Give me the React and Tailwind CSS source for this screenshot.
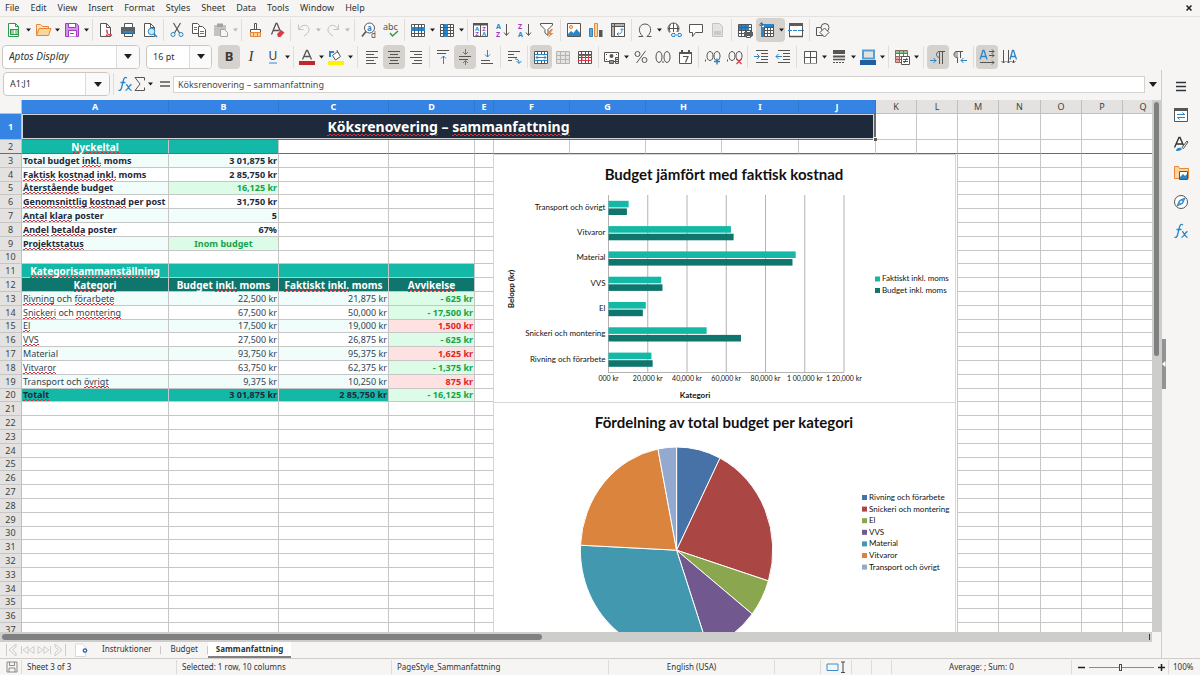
import React from "react";

const INK = "#555553";
const BLUE = "#2a86c8";
const RED = "#dd3b44";
const ORANGE = "#e8873a";
const GREEN = "#2f9a4c";
const PURPLE = "#a13cc0";

const L = ({ d, c = INK, w = 1, f = "none" }) => (
  <path d={d} stroke={c} strokeWidth={w} fill={f} />
);
const T = ({ x, y, s = 7, c = INK, children, b }) => (
  <text x={x} y={y} fontSize={s} fill={c} fontWeight={b ? 700 : 400} fontFamily="Noto Sans, sans-serif">
    {children}
  </text>
);

const GRID = "M1.5 2.5h13v12h-13zM1.5 5.5h13M1.5 8.5h13M1.5 11.5h13M4.5 2.5v12M8.5 2.5v12M11.5 2.5v12";

const ICONS = {
  new: (
    <>
      <L d="M2.5 1.5h7l3 3v10h-10z" c={GREEN} f="#fff" />
      <L d="M9.5 1.5v3h3" c={GREEN} />
      <path d="M4 7h9v6H4z" fill={GREEN} />
      <L d="M5 9h7M5 11h7M8.5 8v4" c="#fff" />
    </>
  ),
  open: (
    <>
      <L d="M1.5 13.5v-11h4l2 2h6v3" c={ORANGE} f="#fbe3bd" />
      <L d="M1.5 13.5l2.5-7h12l-2.5 7z" c={ORANGE} f="#f9d699" />
    </>
  ),
  save: (
    <>
      <L d="M1.5 1.5h11l2 2v11h-13z" c={PURPLE} f="#d493e4" />
      <L d="M4.5 1.5h7v4h-7z" c={PURPLE} f="#fff" />
      <L d="M4.5 14.5v-6h8v6" c={PURPLE} f="#fff" />
      <L d="M6 11.5h4" c={PURPLE} />
    </>
  ),
  pdf: (
    <>
      <L d="M2.5 1.5h6l4 4v9h-10z" f="#fff" />
      <L d="M8.5 1.5v4h4" />
      <L d="M7 15c3-3 3-6 2-7s-1 2 1 4 4 2 4 1-5-.5-7 2z" c={RED} />
    </>
  ),
  print: (
    <>
      <L d="M4.500 5.500v-4h8v4" f="#fff" />
      <path d="M1 5h14v7H1z" fill="#5b6168" />
      <path d="M3 9h10v2H3z" fill={BLUE} />
      <L d="M4.500 11.500h8v3h-8z" f="#fff" />
    </>
  ),
  preview: (
    <>
      <L d="M2.500 1.500h6l4 4v9h-10z" f="#fff" />
      <L d="M8.500 1.500v4h4" />
      <circle cx="9.500" cy="9.500" r="3.300" fill="#cfe6f7" stroke={BLUE} />
      <L d="M12 12l3 3" c={BLUE} w={1.5} />
    </>
  ),
  cut: (
    <>
      <L d="M4.500 1l6 10M11.500 1l-6 10" w={1.2} />
      <circle cx="4" cy="12.500" r="2" fill="none" stroke={BLUE} />
      <circle cx="12" cy="12.500" r="2" fill="none" stroke={BLUE} />
    </>
  ),
  copy: (
    <>
      <L d="M1.500 1.500h5l2 2v8h-7z" f="#fff" />
      <L d="M7.500 4.500h4l3 3v7h-7z" f="#fff" />
      <L d="M3 5.500h3M3 7.500h3M9 9.500h4M9 11.500h4" c={BLUE} />
    </>
  ),
  paste: (
    <>
      <path d="M1 3h12v11H1z" fill="#c4c3c1" />
      <path d="M4 1.500h6V5H4z" fill="#a3a2a0" />
      <L d="M7.500 7.500h4l3 3v4h-7z" c="#a5a4a2" f="#f6f5f4" />
    </>
  ),
  clone: (
    <>
      <L d="M7.500 1.500h2v6h-2z" f="#fff" />
      <L d="M3.500 7.500h10v3h-10z" f="#fff" />
      <L d="M3.500 10.500h10v4h-10z" c={ORANGE} f="#f9d699" />
      <L d="M6.500 11v3M10.500 11v3" c={ORANGE} />
    </>
  ),
  clear: (
    <>
      <L d="M2.500 12.500l4.500-11h1l3.500 8M4 8.500h6" w={1.3} />
      <path d="M8 12l4-4 3.500 2.500-4 4.500H9z" fill={RED} />
    </>
  ),
  undo: <L d="M2.500 2.500v5h5M3 7c3-5 9-5 10 0 .5 3-2 5-5 7" c="#c2c1bf" />,
  redo: <L d="M13.500 2.500v5h-5M13 7c-3-5-9-5-10 0-.5 3 2 5 5 7" c="#c2c1bf" />,
  find: (
    <>
      <circle cx="8.500" cy="6" r="5" fill="#fff" stroke={INK} />
      <T x={6} y={8.5} s={8} c={BLUE} b>a</T>
      <L d="M5 9.500L1 14.500" w={1.6} />
      <T x={10} y={15.5} s={8}>d</T>
    </>
  ),
  spell: (
    <>
      <T x={0} y={8} s={9}>abc</T>
      <L d="M7 11l2.500 3L15 9" c={GREEN} w={1.5} />
    </>
  ),
  row: (
    <>
      <L d={GRID} f="#fff" />
      <path d="M1 5h14v4H1z" fill={BLUE} />
      <L d="M4.500 5v4M8.500 5v4M11.500 5v4" c="#1f6aa5" />
    </>
  ),
  col: (
    <>
      <L d={GRID} f="#fff" />
      <path d="M5 2h4v13H5z" fill={BLUE} />
      <L d="M5 5.500h4M5 8.500h4M5 11.500h4" c="#1f6aa5" />
    </>
  ),
  sort: (
    <>
      <L d="M.5 1.500h14v13H.5zM7.500 1.500v13" f="#fff" />
      <path d="M0 1h15v2.500H0z" fill={INK} />
      <T x={2} y={8.8} s={6} c={BLUE} b>A</T>
      <T x={2.2} y={14} s={6} c={PURPLE} b>Z</T>
      <T x={9.2} y={8.8} s={6} c={PURPLE} b>Z</T>
      <T x={9} y={14} s={6} c={BLUE} b>A</T>
    </>
  ),
  az: (
    <>
      <T x={1} y={6.5} s={7} c={BLUE} b>A</T>
      <T x={1} y={15} s={7} c={PURPLE} b>Z</T>
      <L d="M11.500 2v11M9 10.500l2.500 3 2.500-3" />
    </>
  ),
  za: (
    <>
      <T x={1} y={6.5} s={7} c={PURPLE} b>Z</T>
      <T x={1} y={15} s={7} c={BLUE} b>A</T>
      <L d="M11.500 2v11M9 10.500l2.500 3 2.500-3" />
    </>
  ),
  filter: (
    <>
      <L d="M1.500 1.500h12v1.500l-4.500 4.500v6l-3-2.500V7.500L1.500 3z" f="#fff" />
      <path d="M12 7l-4 5h3l-2 4 5.500-5h-3L14 7z" fill={ORANGE} />
    </>
  ),
  image: (
    <>
      <L d="M1.500 1.500h13v13h-13z" f="#fff" />
      <circle cx="5" cy="5" r="1.600" fill="#f9d699" stroke={ORANGE} />
      <path d="M2 14v-2l3-3 2.500 2 3-4 3.500 4v3z" fill={BLUE} />
    </>
  ),
  chart: (
    <>
      <L d="M1.500 6.500h3v8h-3z" c={BLUE} f="#5aa7df" />
      <L d="M6.500 1.500h3v13h-3z" c={ORANGE} f="#f9d699" />
      <path d="M11 8h3.500v7H11z" fill={INK} />
    </>
  ),
  pivot: (
    <>
      <L d="M1.500 1.500h13v13h-13z" f="#fff" />
      <path d="M2 2h12v2H2zM2 4h2v10H2z" fill="#b5b4b2" />
      <L d="M1.500 1.500h13v13h-13zM4.500 1.500v13M1.500 4.500h13" />
      <L d="M7 12c4 0 5-1 5-5M10.500 8L12 6.500 13.500 8M8.500 10.500L7 12l1.500 1.500" c={BLUE} />
    </>
  ),
  omega: <L d="M1.500 14.500h4.500c-6-5-4-12.500 2-12.500s8 7.500 2 12.500h4.500" />,
  link: (
    <>
      <circle cx="7.500" cy="6.500" r="5.500" fill="#fff" stroke={INK} />
      <L d="M2 6.500h11M7.500 1v11M4.500 2c-1.500 3-1.500 6 0 9M10.500 2c1.500 3 1.500 6 0 9" />
      <path d="M4 10h12v6H4z" fill="#f6f5f4" />
      <L d="M9 11.500H7a1.500 1.500 0 000 3h2M12 11.500h2a1.500 1.500 0 010 3h-2M8 13h5" c={BLUE} />
    </>
  ),
  comment: <L d="M1.500 2.500h13v8h-7l-3 4v-4h-3z" f="#fff" />,
  headfoot: (
    <>
      <L d="M2.500 1.500h7l3 3v10h-10z" c="#c4c3c1" f="#e4e3e1" />
      <path d="M4 9h7v4H4z" fill="#c9c8c6" />
    </>
  ),
  area: (
    <>
      <L d={GRID} f="#fff" />
      <path d="M2 3h10v5H2z" fill={BLUE} />
      <L d="M2 5.500h10M4.500 3v5M8.500 3v5" c="#1f6aa5" />
      <path d="M7 10h9v4H7z" fill="#5b6168" />
      <L d="M9.500 8.500h4v2h-4zM9.500 13.500h4v2h-4z" f="#fff" />
    </>
  ),
  freeze: (
    <>
      <L d="M2.500 2.500h12v12h-12zM5.500 2.500v12M2.500 5.500h12M8.500 2.500v12M11.500 2.500v12M2.500 8.500h12M2.500 11.500h12" f="#fff" />
      <path d="M5 2h9v3H5zM2 5h3v10H2z" fill={BLUE} />
      <L d="M0 3h5M2.500 0v5M1 1l3 3M4 1L1 4" c={BLUE} />
    </>
  ),
  split: (
    <>
      <L d="M1.500 1.500h13v13h-13z" f="#fff" />
      <path d="M1 1h14v3H1z" fill="#5b5b59" />
      <L d="M1 14.500h14" w={1.5} />
      <path d="M0 8.500h16" stroke={BLUE} strokeDasharray="4 1" />
    </>
  ),
  shapes: (
    <>
      <L d="M1.500 5.500h8v8h-8z" />
      <circle cx="10" cy="5.500" r="4" fill="#f6f5f4" stroke={INK} />
      <L d="M9.500 6l4.500 4.500-4.500 4.500L5 10.500z" f="#f6f5f4" />
    </>
  ),
  textcolor: (
    <>
      <L d="M3.500 10.500l4-9h1l4 9M5 7.500h6" w={1.3} />
      <path d="M0 12h16v4H0z" fill="#c4262e" />
    </>
  ),
  highlight: (
    <>
      <L d="M4.500 6.500l5-4 3 5-5 3.500z" f="#fff" />
      <path d="M1 2h5v2H3v4H1z" fill={BLUE} />
      <L d="M9 1l1 3" />
      <path d="M0 12h16v4H0z" fill="#fff200" />
    </>
  ),
  left: <L d="M2 2.500h12M2 5.500h8M2 8.500h12M2 11.500h8M2 14.500h10" />,
  center: <L d="M2 2.500h12M4 5.500h8M2 8.500h12M4 11.500h8M3 14.500h10" />,
  right: <L d="M2 2.500h12M6 5.500h8M2 8.500h12M6 11.500h8M4 14.500h10" />,
  top: (
    <>
      <L d="M2 1.500h12M2 4.500h9" />
      <L d="M8.500 15V7M6 9.500L8.500 7 11 9.500" c={BLUE} />
    </>
  ),
  middle: (
    <>
      <L d="M2 7.500h12M2 10.500h9" />
      <L d="M8.500 0v5M6 3l2.500 2.500L11 3M8.500 16v-4M6 14l2.500-2.500L11 14" c={BLUE} />
    </>
  ),
  bottom: (
    <>
      <L d="M2 11.500h9M2 14.500h12" />
      <L d="M8.500 1v7M6 5.500L8.500 8 11 5.500" c={BLUE} />
    </>
  ),
  wrap: (
    <>
      <L d="M2 2.500h12M2 5.500h6M2 8.500h9M2 11.500h4" />
      <L d="M9 10c3 0 4 1 4 4M10.500 12l2.500 2.500 2.500-2.500" c={BLUE} />
    </>
  ),
  merge: (
    <>
      <L d={GRID} f="#fff" />
      <path d="M2 6h12v5H2z" fill="#fff" />
      <L d="M1.500 5.500h13M1.500 11.500h13M3 8.500h10M5 6.500l-2 2 2 2M11 6.500l2 2-2 2" c={BLUE} />
    </>
  ),
  merge2: (
    <>
      <path d="M1 2h14v12H1z" fill="#e4e3e1" />
      <L d="M1.500 2.500h13v12h-13zM1.500 6.500h13M1.500 10.500h13M5.500 2.500v12M10.500 2.500v12" c="#b5b4b2" />
    </>
  ),
  unmerge: (
    <>
      <L d={GRID} f="#fff" />
      <L d="M1 6.500h14M1 11.500h14M5 6.500v5M8.500 6.500v5M11.500 6.500v5" c={RED} />
    </>
  ),
  currency: (
    <>
      <L d="M.5 3.500h14v9H.5z" f="#fff" />
      <circle cx="7.500" cy="7" r="2" fill={INK} />
      <path d="M2 10h1v1H2zM2 5h1v1H2zM12 5h1v1h-1z" fill={INK} />
      <L d="M5.500 11.500h4v3h-4zM11.500 8.500h3v6h-3z" f="#d8d7d5" />
      <L d="M5.500 13h4M11.500 10.500h3M11.500 12.500h3" />
    </>
  ),
  percent: (
    <>
      <circle cx="4.500" cy="5" r="2.500" fill="none" stroke={INK} />
      <circle cx="11.500" cy="11" r="2.500" fill="none" stroke={INK} />
      <L d="M12.500 2l-9 12" />
    </>
  ),
  number: (
    <>
      <L d="M4 2.500c-4 0-4 11 0 11s4-11 0-11zM12 2.500c-4 0-4 11 0 11s4-11 0-11z" />
      <L d="M8 12v2" />
    </>
  ),
  date: (
    <>
      <L d="M2.500 3.500h12v11h-12z" f="#fff" />
      <path d="M2 3h13v2H2zM4 1h2v3H4zM11 1h2v3h-2z" fill={INK} />
      <L d="M6 7.500h5l-2.500 6" w={1.2} />
    </>
  ),
  adddec: (
    <>
      <L d="M6 2.500c-4 0-4 9 0 9s4-9 0-9zM13 2.500c-4 0-4 9 0 9s4-9 0-9zM1.500 10.500v2" />
      <L d="M10 12.500h6M13 9.500v6" c={BLUE} w={1.4} />
    </>
  ),
  deldec: (
    <>
      <L d="M6 2.500c-4 0-4 9 0 9s4-9 0-9zM13 2.500c-4 0-4 9 0 9s4-9 0-9zM1.500 10.500v2" />
      <L d="M10.500 10l5 5M15.500 10l-5 5" c={RED} w={1.2} />
    </>
  ),
  indent: (
    <>
      <L d="M3 1.500h12M8 4.500h7M8 7.500h7M8 10.500h7M3 13.500h12" />
      <L d="M1 7.500h5M4 5l2.500 2.500L4 10" c={BLUE} />
    </>
  ),
  outdent: (
    <>
      <L d="M3 1.500h12M8 4.500h7M8 7.500h7M8 10.500h7M3 13.500h12" />
      <L d="M1 7.500h6M3.500 5L1 7.500 3.500 10" c={BLUE} />
    </>
  ),
  borders: (
    <>
      <L d="M2.500 2.500h12v12h-12zM8.500 2.500v12M2.500 8.500h12" f="#fff" />
      <L d="M2 14.500h13" c={ORANGE} />
    </>
  ),
  linestyle: (
    <>
      <path d="M2 1h12v4H2zM2 6.500h12v2H2z" fill={INK} />
      <L d="M2 10.500h12" w={1.5} />
      <path d="M2 13h2v1H2zM5 13h2v1H5zM8 13h2v1H8zM11 13h2v1h-2z" fill={INK} />
    </>
  ),
  linecolor: (
    <>
      <L d="M3 1.500h11v8H3z" c="#5a9fd4" w={2} f="#e4e3e1" />
      <path d="M0 11h16v5H0z" fill="#1f5f9e" />
    </>
  ),
  conditional: (
    <>
      <path d="M1 1h12v12H1z" fill="#fff" />
      <path d="M1 1h12v3H1z" fill="#7fc98f" />
      <path d="M1 7h5v6H1z" fill="#f2a0a0" />
      <L d="M1.500 1.500h12v12h-12zM1.500 4.500h12M1.500 7.500h12M1.500 10.500h12M5.500 1.500v12M9.500 1.500v12" c="#8d6a62" />
      <L d="M7.500 7.500h8v8h-8z" f="#fff" />
      <L d="M9 10.500h5M9 12.500h5M13 9l-3 5" />
    </>
  ),
  ltr: (
    <>
      <L d="M15 2.500H9.500c-4 0-4 6 0 6V15M9.500 2.500V9M12.500 2.500V15" />
      <L d="M0 11.500h6M3.500 9L6 11.500 3.500 14" c={BLUE} />
    </>
  ),
  rtl: (
    <>
      <path d="M5 2h1v6H5c-4 0-4-6 0-6z" fill="#b5b4b2" />
      <L d="M11 2.500H5c-4 0-4 6 0 6h.500V14M8.500 2.500V9" />
      <L d="M15 11.500H9M11.500 9L9 11.500l2.500 2.500" c={BLUE} />
    </>
  ),
  horiz: (
    <>
      <L d="M1 10.500l3-9h1l3 9M2.500 7.500h5" c={BLUE} w={1.3} />
      <L d="M10 2.500h5M10 6.500h5M1 13.500h14M13 .5l2 2-2 2M13 4.500l2 2-2 2M13 11.500l2 2-2 2" />
    </>
  ),
  vert: (
    <>
      <L d="M9 10.500l2.500-9h1l3 9M10 7.500h4.500" c={BLUE} w={1.3} />
      <L d="M2.500 1v13M7.500 1v13M12.500 11v3M.5 12l2 2 2-2M5.500 12l2 2 2-2M10.500 12l2 2 2-2" />
    </>
  ),
  fx: (
    <>
      <L d="M10 2C8 .5 7 2 6.500 4L4.500 12c-.5 2-1.500 3-3 2M3.500 6.500h5" c={BLUE} w={1.3} />
      <L d="M9 8.500c2 0 3 6 5.500 6M14.500 8.500c-2 0-4 6-6 6" c={BLUE} w={1.3} />
    </>
  ),
  sigma: <L d="M12.500 4.500v-3H3l5 6.500-5 6.500h9.500v-3" />,
  equals: <L d="M3 6h10M3 10h10" w={1.5} />,
  menu: <L d="M3 4.500h10M3 8.500h10M3 12.500h10" c="#2e3436" w={1.5} />,
  props: (
    <>
      <L d="M1.500 1.500h13v13h-13z" f="#fff" />
      <path d="M1 1h14v3H1z" fill={INK} />
      <L d="M4 7.500h8M4 10.500h8M9.500 5.500l2 2M6.500 12.500l-2-2" c={BLUE} />
    </>
  ),
  styles: (
    <>
      <L d="M1.500 11.500l4.500-10h1l3.500 8M3.500 8h6" c="#2e3436" w={1.4} />
      <path d="M3 15c0-3 3-4 5-3s0 3-5 3z" fill={BLUE} />
      <L d="M9 11.500L14 5l1 1-4.500 6.500z" f="#fff" />
    </>
  ),
  gallery: (
    <>
      <L d="M1.500 13.500v-12h4l1 2h9v10z" c={ORANGE} f="#f9d699" />
      <L d="M6.500 6.500h8v8h-8z" f="#fff" />
      <path d="M7 14v-2l3-3 2 2 2-2v5z" fill={BLUE} />
    </>
  ),
  navigator: (
    <>
      <circle cx="8" cy="8" r="6.500" fill="#fff" stroke={INK} />
      <L d="M12 4L9.500 9.500 4 12l2.500-5.500z" c={BLUE} f="#5aa7df" />
      <circle cx="8" cy="8" r="1" fill="#fff" />
    </>
  ),
};

function Icon({ name }) {
  return (
    <svg viewBox="0 0 16 16" className="size-4 shrink-0 overflow-visible" aria-hidden="true">
      {ICONS[name]}
    </svg>
  );
}

function Caret({ muted, big }) {
  return (
    <svg
      viewBox="0 0 8 5"
      className={big ? "h-[5px] w-2 shrink-0" : "h-1 w-[5px] shrink-0"}
      aria-hidden="true"
    >
      <path d="M0 0h8L4 5z" fill={muted ? "#b8b7b5" : "#1f1f1f"} />
    </svg>
  );
}

/* Toolbar entries: "|" is a divider, "||" a wide divider, "+" adds a menu arrow,
   "*" marks a pressed button and "-" a disabled one. */
const STANDARD = [
  ["new", "New", "+"], ["open", "Open", "+"], ["save", "Save", "+"], "|",
  ["pdf", "Export as PDF"], ["print", "Print"], ["preview", "Print Preview"], "|",
  ["cut", "Cut"], ["copy", "Copy"], ["paste", "Paste", "+-"], "|",
  ["clone", "Clone Formatting"], ["clear", "Clear Formatting"], "|",
  ["undo", "Undo", "+-"], ["redo", "Redo", "+-"], "||",
  ["find", "Find and Replace"], ["spell", "Spelling"], "|",
  ["row", "Row", "+"], ["col", "Column", "+"], "|",
  ["sort", "Sort"], ["az", "Sort Ascending"], ["za", "Sort Descending"], ["filter", "AutoFilter"], "|",
  ["image", "Insert Image"], ["chart", "Insert Chart"], ["pivot", "Pivot Table"], "|",
  ["omega", "Special Character", "+"], ["link", "Hyperlink"], ["comment", "Comment"], ["headfoot", "Headers and Footers", "-"], "|",
  ["area", "Print Area"], ["freeze", "Freeze Rows and Columns", "+*"], ["split", "Split Window"], "|",
  ["shapes", "Draw Functions"],
];

const FORMATTING = [
  ["bold", "Bold", "*"], ["italic", "Italic"], ["underline", "Underline", "+"], "|",
  ["textcolor", "Font Color", "+"], ["highlight", "Background Color", "+"], "||",
  ["left", "Align Left"], ["center", "Center Horizontally", "*"], ["right", "Align Right"], "|",
  ["top", "Align Top"], ["middle", "Center Vertically", "*"], ["bottom", "Align Bottom"], "|",
  ["wrap", "Wrap Text"], "|",
  ["merge", "Merge and Center", "*"], ["merge2", "Merge Cells", "-"], ["unmerge", "Unmerge Cells"], "|",
  ["currency", "Currency", "+"], ["percent", "Percent"], ["number", "Number"], ["date", "Date"], "|",
  ["adddec", "Add Decimal Place"], ["deldec", "Delete Decimal Place"], "|",
  ["indent", "Increase Indent"], ["outdent", "Decrease Indent"], "|",
  ["borders", "Borders", "+"], ["linestyle", "Border Style", "+"], ["linecolor", "Border Color", "+"], "|",
  ["conditional", "Conditional Formatting", "+"], "||",
  ["ltr", "Left-to-Right", "*"], ["rtl", "Right-to-Left"], "|",
  ["horiz", "Text Horizontal", "*"], ["vert", "Text Vertical"],
];

function Glyph({ name }) {
  if (name === "bold") return <span className="text-[13px] font-bold text-[#3a3a38]">B</span>;
  if (name === "italic") return <span className="font-[Liberation_Serif] text-[15px] italic text-[#3a3a38]">I</span>;
  if (name === "underline")
    return <span className="border-b-2 border-[#8fc0e6] text-[12px] leading-[13px] text-[#3a3a38]">U</span>;
  return <Icon name={name} />;
}

function Tools({ items }) {
  return items.map((it, i) => {
    if (typeof it === "string")
      return (
        <span key={i} className={`flex h-[22px] shrink-0 justify-center ${it === "||" ? "w-[7px]" : "w-[5px]"}`}>
          <span className="w-px bg-[#e0dedb]" />
        </span>
      );
    const [name, label, flags = ""] = it;
    const off = flags.includes("-");
    return (
      <span
        key={i}
        className={`flex h-6 shrink-0 items-center rounded ${flags.includes("*") ? "bg-[#d5d2ce]" : ""}`}
      >
        <button type="button" aria-label={label} disabled={off} className="flex h-6 w-[22px] items-center justify-center">
          <Glyph name={name} />
        </button>
        {flags.includes("+") && (
          <button type="button" aria-label={`${label} options`} disabled={off} className="flex h-6 w-[7px] items-center justify-center">
            <Caret muted={off} />
          </button>
        )}
      </span>
    );
  });
}

function Combo({ label, value, box, arrow, italic }) {
  return (
    <span className={`flex h-6 shrink-0 overflow-hidden rounded border border-[#cdc7c2] bg-white ${box}`}>
      <input
        aria-label={label}
        defaultValue={value}
        className={`min-w-0 flex-1 bg-transparent pl-1.5 text-[#2e3436] outline-none ${italic ? "text-[10px] italic" : "text-[9px]"}`}
      />
      <button
        type="button"
        aria-label={`${label} list`}
        className={`flex items-center justify-center border-l border-[#dedad6] bg-[#fbfafa] ${arrow}`}
      >
        <Caret big />
      </button>
    </span>
  );
}

const MENUS = ["File", "Edit", "View", "Insert", "Format", "Styles", "Sheet", "Data", "Tools", "Window", "Help"];

const COLUMNS = [
  ["A", "w-[147px]"], ["B", "w-[110px]"], ["C", "w-[110px]"], ["D", "w-[86px]"], ["E", "w-[19px]"],
  ["F", "w-[76px]"], ["G", "w-[76px]"], ["H", "w-[76px]"], ["I", "w-[77px]"], ["J", "w-[77px]"],
  ["K", "w-[41px]"], ["L", "w-[41px]"], ["M", "w-[41px]"], ["N", "w-[42px]"], ["O", "w-[41px]"],
  ["P", "w-[41px]"], ["Q", "w-[41px]"],
];

const TINT = "bg-[#f0fdfa]";
const HEAD = "bg-[#14b8a6] text-center text-[10px] font-bold text-white";
const SUBHEAD = "bg-[#0f766e] text-center text-[10px] font-bold text-white";
const NUM = "text-right text-[#374151]";
const BOLDNUM = "text-right font-bold text-[#1e293b]";
const KEY = "font-bold text-[#1e293b]";
const GOOD = "bg-[#dcfce7] text-right font-bold text-[#16a34a]";
const BAD = "bg-[#fee2e2] text-right font-bold text-[#dc2626]";
const TOTAL = "bg-[#14b8a6] font-bold text-[#1e293b]";

const categoryRow = (name, budget, actual, diff, tinted) => {
  const bg = tinted ? TINT : "";
  return [
    [name, `text-[#374151] ${bg}`],
    [budget, `${NUM} ${bg}`],
    [actual, `${NUM} ${bg}`],
    [diff, diff.startsWith("-") ? GOOD : BAD],
  ];
};

/* Words between underscores are flagged by the spell checker. */
const CELLS = {
  2: [["_Nyckeltal_", HEAD], ["", HEAD]],
  3: [["Total budget _inkl._ moms", `${KEY} ${TINT}`], ["3 01,875 kr", `${BOLDNUM} ${TINT}`]],
  4: [["_Faktisk_ _kostnad_ _inkl._ moms", KEY], ["2 85,750 kr", BOLDNUM]],
  5: [["_Återstående_ budget", `${KEY} ${TINT}`], ["16,125 kr", GOOD]],
  6: [["_Genomsnittlig_ _kostnad_ per post", KEY], ["31,750 kr", BOLDNUM]],
  7: [["_Antal_ _klara_ poster", `${KEY} ${TINT}`], ["5", `${BOLDNUM} ${TINT}`]],
  8: [["_Andel_ _betalda_ poster", KEY], ["67%", BOLDNUM]],
  9: [["_Projektstatus_", `${KEY} ${TINT}`], ["Inom budget", "bg-[#dcfce7] text-center font-bold text-[#16a34a]"]],
  11: [["_Kategorisammanställning_", HEAD], ["", HEAD], ["", HEAD], ["", HEAD]],
  12: [["_Kategori_", SUBHEAD], ["Budget _inkl._ moms", SUBHEAD], ["_Faktiskt_ _inkl._ moms", SUBHEAD], ["_Avvikelse_", SUBHEAD]],
  13: categoryRow("_Rivning_ och _förarbete_", "22,500 kr", "21,875 kr", "- 625 kr", true),
  14: categoryRow("_Snickeri_ och _montering_", "67,500 kr", "50,000 kr", "- 17,500 kr", false),
  15: categoryRow("_El_", "17,500 kr", "19,000 kr", "1,500 kr", true),
  16: categoryRow("_VVS_", "27,500 kr", "26,875 kr", "- 625 kr", false),
  17: categoryRow("Material", "93,750 kr", "95,375 kr", "1,625 kr", true),
  18: categoryRow("_Vitvaror_", "63,750 kr", "62,375 kr", "- 1,375 kr", false),
  19: categoryRow("Transport och _övrigt_", "9,375 kr", "10,250 kr", "875 kr", true),
  20: [["_Totalt_", TOTAL], ["3 01,875 kr", `${TOTAL} text-right`], ["2 85,750 kr", `${TOTAL} text-right`], ["- 16,125 kr", GOOD]],
};

/* The zigzag is two one-pixel dash rows, offset by half a period. */
function Spell({ text }) {
  return text.split("_").map((part, i) =>
    i % 2 ? (
      <span
        key={i}
        className="bg-[linear-gradient(90deg,#e0303a_50%,transparent_50%),linear-gradient(90deg,transparent_50%,#e0303a_50%)] bg-[length:4px_1px,4px_1px] bg-[position:0_100%,0_calc(100%-1px)] bg-repeat-x"
      >
        {part}
      </span>
    ) : (
      part
    )
  );
}

const ROWS = Array.from({ length: 36 }, (_, i) => i + 2);

function Sheet() {
  return (
    <table className="w-[1164px] table-fixed border-separate border-spacing-0 text-[9px] leading-[12px] whitespace-nowrap">
      <colgroup>
        <col className="w-[22px]" />
        {COLUMNS.map(([c, w]) => (
          <col key={c} className={w} />
        ))}
      </colgroup>
      <thead>
        <tr className="h-[14px]">
          <td className="border-r border-b border-[#bfbfbf] bg-[#f6f5f4] p-0" />
          {COLUMNS.map(([c], i) => (
            <th
              key={c}
              scope="col"
              className={`border-r border-b p-0 ${
                i < 10
                  ? "border-[#2f78cf] bg-[#3584e4] font-bold text-white"
                  : "border-[#bfbfbf] bg-[#e3e2e1] font-normal text-[#3f3f3f]"
              }`}
            >
              {c}
            </th>
          ))}
        </tr>
      </thead>
      <tbody>
        <tr className="h-[26px]">
          <th scope="row" className="border-r border-b border-[#bfbfbf] bg-[#3584e4] p-0 font-bold text-white">1</th>
          <td colSpan={10} className="border-r border-b border-[#c6c6c6] bg-[#1e293b] p-0 text-center text-[14px] leading-[24px] font-bold text-white">
            <Spell text="_Köksrenovering_ – _sammanfattning_" />
          </td>
          {COLUMNS.slice(10).map(([c]) => (
            <td key={c} className="border-r border-b border-[#c6c6c6] p-0" />
          ))}
        </tr>
        {ROWS.map((n) => {
          const cells = CELLS[n] || [];
          const line = n === 2 ? "border-b-[#6b6b6b]" : "border-b-[#c6c6c6]";
          return (
            <tr key={n} className={n % 5 === 0 ? "h-[13px]" : "h-[14px]"}>
              <th scope="row" className={`border-r border-b border-r-[#bfbfbf] bg-[#e3e2e1] p-0 font-normal text-[#3f3f3f] ${line}`}>
                {n}
              </th>
              {COLUMNS.map(([c], i) => {
                const [text, style] = cells[i] || ["", ""];
                return (
                  <td key={c} className={`border-r border-b border-r-[#c6c6c6] px-px py-0 ${line} ${style}`}>
                    {text && <Spell text={text} />}
                  </td>
                );
              })}
            </tr>
          );
        })}
      </tbody>
    </table>
  );
}

const DATA = [
  { name: "Rivning och förarbete", budget: 22500, actual: 21875, color: "#4672a8" },
  { name: "Snickeri och montering", budget: 67500, actual: 50000, color: "#aa4643" },
  { name: "El", budget: 17500, actual: 19000, color: "#8aa64f" },
  { name: "VVS", budget: 27500, actual: 26875, color: "#71588f" },
  { name: "Material", budget: 93750, actual: 95375, color: "#4298af" },
  { name: "Vitvaror", budget: 63750, actual: 62375, color: "#db843d" },
  { name: "Transport och övrigt", budget: 9375, actual: 10250, color: "#93a9cf" },
];

const TICKS = ["000 kr", "20,000 kr", "40,000 kr", "60,000 kr", "80,000 kr", "1 00,000 kr", "1 20,000 kr"];

function BarChart() {
  const scale = 235.5 / 120000;
  return (
    <svg width="463" height="249" viewBox="0 0 463 249" fontFamily="Lato, sans-serif" fontSize="8" fill="#111" className="block" role="img" aria-label="Budget jämfört med faktisk kostnad">
      <rect x=".5" y=".5" width="462" height="248" fill="#fff" stroke="#d6d6d6" />
      <text x="231" y="26" fontSize="15" fontWeight="700" textAnchor="middle">Budget jämfört med faktisk kostnad</text>
      {TICKS.map((t, i) => (
        <g key={t}>
          <path d={`M${115.5 + i * 39.25} 41V218`} stroke="#b3b3b3" />
          <text x={115.5 + i * 39.25} y="227" fontSize="7" textAnchor="middle">{t}</text>
        </g>
      ))}
      <path d="M115 218.500h236" stroke="#b3b3b3" />
      {[...DATA].reverse().map((d, i) => {
        const y = 46.8 + i * 25.3;
        return (
          <g key={d.name}>
            <rect x="115.500" y={y} width={d.actual * scale} height="6.600" fill="#14b8a6" />
            <rect x="115.500" y={y + 7.6} width={d.budget * scale} height="6.600" fill="#0f766e" />
            <text x="112.500" y={y + 9} textAnchor="end">{d.name}</text>
          </g>
        );
      })}
      <text x="202" y="244" textAnchor="middle" fontWeight="700">Kategori</text>
      <text transform="translate(21 135) rotate(-90)" textAnchor="middle" fontWeight="700">Belopp (kr)</text>
      <rect x="382" y="122.500" width="5" height="5" fill="#14b8a6" />
      <text x="389" y="127">Faktiskt inkl. moms</text>
      <rect x="382" y="134" width="5" height="5" fill="#0f766e" />
      <text x="389" y="139">Budget inkl. moms</text>
    </svg>
  );
}

function PieChart() {
  const total = DATA.reduce((s, d) => s + d.budget, 0);
  const cx = 183.6, cy = 147.2, rx = 96.2, ry = 103.2;
  let sum = 0;
  const at = (v) => {
    const a = (v / total) * Math.PI * 2;
    return `${(cx + rx * Math.sin(a)).toFixed(2)} ${(cy - ry * Math.cos(a)).toFixed(2)}`;
  };
  return (
    <svg width="463" height="280" viewBox="0 0 463 280" fontFamily="Lato, sans-serif" fontSize="8" fill="#111" className="block" role="img" aria-label="Fördelning av total budget per kategori">
      <rect x=".5" y="-.5" width="462" height="280" fill="#fff" stroke="#d6d6d6" />
      <text x="231" y="25" fontSize="15" fontWeight="700" textAnchor="middle">Fördelning av total budget per kategori</text>
      {DATA.map((d, i) => {
        const from = at(sum);
        sum += d.budget;
        return (
          <g key={d.name}>
            <path d={`M${cx} ${cy}L${from}A${rx} ${ry} 0 0 1 ${at(sum)}Z`} fill={d.color} stroke="#fff" strokeWidth="1" />
            <rect x="369" y={92 + i * 11.6} width="5" height="5" fill={d.color} />
            <text x="376" y={97 + i * 11.6}>{d.name}</text>
          </g>
        );
      })}
    </svg>
  );
}

function NavArrows() {
  return (
    <svg viewBox="0 0 62 14" className="h-3.5 w-[62px]" fill="#f6f5f4" stroke="#cfcdca" aria-hidden="true">
      <path d="M1.500 1v12M11 1L4 7l7 6v-3L7.500 7 11 4zM16.500 3v8M23 3.500L18 7l5 3.500zM29 3.500L24 7l5 3.500zM33 3.500L38 7l-5 3.500zM39 3.500L44 7l-5 3.500zM45.500 3v8M50 1l7 6-7 6v-3l3.500-3L50 4zM60.500 1v12" />
    </svg>
  );
}

function Cell({ className, children }) {
  return <div className={`flex shrink-0 items-center border-l border-[#dedcd9] ${className}`}>{children}</div>;
}

export default function App() {
  return (
    <div className="flex h-screen min-h-0 flex-col overflow-hidden bg-[#f6f5f4] font-['Noto_Sans',sans-serif] text-[9px] text-[#2e3436]">
      <nav aria-label="Main menu" className="flex h-[17px] shrink-0 items-center gap-px border-b border-[#e4e2df]">
        {MENUS.map((m) => (
          <button key={m} type="button" className="px-[5px] leading-4">{m}</button>
        ))}
        <button type="button" aria-label="Close document" className="mr-1.5 ml-auto flex size-2.5 items-center justify-center">
          <svg viewBox="0 0 6 6" className="size-1.5" aria-hidden="true"><path d="M.5.5l5 5M5.500.5l-5 5" stroke="#1f1f1f" strokeWidth="1.500" /></svg>
        </button>
      </nav>

      <div role="toolbar" aria-label="Standard" className="flex h-[26px] shrink-0 items-center pl-[3px]">
        <Tools items={STANDARD} />
      </div>
      <div role="toolbar" aria-label="Formatting" className="flex h-[27px] shrink-0 items-center pl-0.5">
        <Combo label="Font Name" value="Aptos Display" box="mr-1.5 w-[138px]" arrow="w-[23px]" italic />
        <Combo label="Font Size" value="16 pt" box="mr-1.5 w-[66px]" arrow="w-[22px]" />
        <Tools items={FORMATTING} />
      </div>

      <div className="flex min-h-0 flex-1">
        <main className="flex min-w-0 flex-1 flex-col">
          <div className="flex h-[30px] shrink-0 items-center pb-0.5 pl-[3px]">
            <Combo label="Name Box" value="A1:J1" box="w-[107px]" arrow="w-[24px]" />
            <span className="mx-[3px] h-[22px] w-px bg-[#e0dedb]" />
            <button type="button" aria-label="Function Wizard" className="flex w-[15px] justify-center"><Icon name="fx" /></button>
            <button type="button" aria-label="Select Function" className="flex w-[25px] items-center"><Icon name="sigma" /><Caret /></button>
            <button type="button" aria-label="Formula" className="flex w-[16px] justify-center"><Icon name="equals" /></button>
            <input
              aria-label="Input line"
              defaultValue="Köksrenovering – sammanfattning"
              className="h-[17px] min-w-0 flex-1 border border-[#d5d3d0] bg-white pl-1 text-[#4a4a48] outline-none"
            />
            <button type="button" aria-label="Expand Formula Bar" className="flex w-4 justify-center"><Caret big /></button>
          </div>

          <div className="flex min-h-0 flex-1">
            <div className="relative min-w-0 flex-1 overflow-hidden bg-white">
              <Sheet />
              <div className="pointer-events-none absolute top-[14px] left-[22px] h-[26px] w-[854px] border-r-2 border-b border-[#6b6b6b]">
                <div className="size-full border border-white/80" />
                <span className="absolute -right-[3px] -bottom-0.5 size-1 border-t border-l border-white bg-[#5b5b59]" />
              </div>
              <div className="absolute top-[54px] left-[493px] border-r border-white bg-white">
                <BarChart />
                <PieChart />
              </div>
            </div>
            <div className="w-[9px] shrink-0 bg-[#cdcdcc] px-0.5 pt-0.5">
              <div className="h-[48%] rounded-full bg-[#7f8180]" />
            </div>
          </div>

          <div className="mr-[9px] flex h-[10px] shrink-0 items-center bg-[#cdcdcc] pr-0.5 pl-0.5">
            <div className="h-1.5 w-[47%] rounded-full bg-[#7f8180]" />
            <div className="ml-auto h-1.5 w-px bg-[#3a3a38]" />
          </div>

          <div className="flex h-4 shrink-0 items-stretch pl-[5px] text-[8px]">
            <button type="button" aria-label="Scroll sheets" className="flex items-center"><NavArrows /></button>
            <button type="button" aria-label="Add sheet" className="ml-2 flex items-center">
              <svg viewBox="0 0 14 14" className="size-3.5" aria-hidden="true">
                <path d="M.5 1h7l3 3v9.500H.5z" fill="#fff" stroke="#dcdad7" />
                <circle cx="10" cy="7.500" r="1.700" fill="#fff" stroke="#2f5fa8" strokeWidth="1.300" />
              </svg>
            </button>
            <div role="tablist" className="ml-2 flex">
              <button type="button" role="tab" aria-selected="false" className="px-[5px] pb-0.5">Instruktioner</button>
              <span className="mx-1 mt-1 mb-1 w-px bg-[#c9c7c4]" />
              <button type="button" role="tab" aria-selected="false" className="px-[5px] pb-0.5">Budget</button>
              <span className="mt-1 mb-1 ml-1 w-px bg-[#c9c7c4]" />
              <button type="button" role="tab" aria-selected="true" className="border-b-2 border-[#808080] bg-white px-2 font-bold">Sammanfattning</button>
            </div>
          </div>
        </main>

        <aside className="relative flex w-[39px] shrink-0 flex-col items-center gap-[13px] border-l border-[#cfcdca] pt-2">
          {[["menu", "Sidebar Settings"], ["props", "Properties"], ["styles", "Styles"], ["gallery", "Gallery"], ["navigator", "Navigator"], ["fx", "Functions"]].map(([n, l]) => (
            <button key={n} type="button" aria-label={l}><Icon name={n} /></button>
          ))}
          <button type="button" aria-label="Hide sidebar" className="absolute top-[269px] left-0 flex h-[50px] w-1 items-center justify-center bg-[#929493]">
            <svg viewBox="0 0 4 6" className="h-1.5 w-1" aria-hidden="true"><path d="M3.500 0v6L0 3z" fill="#fff" /></svg>
          </button>
        </aside>
      </div>

      <footer className="flex h-[17px] shrink-0 border-t border-[#cfcdca] py-px text-[8px] text-[#2e3436]">
        <div className="flex w-[21px] shrink-0 items-center justify-center pl-0.5">
          <svg viewBox="0 0 12 12" className="size-3" fill="none" stroke="#8b8a88" aria-label="Document saved"><path d="M1 1h10v10H1zM3.500 1v3.500h5V1M3 11V7h6v4" /></svg>
        </div>
        <Cell className="w-[155px] pl-[5px]">Sheet 3 of 3</Cell>
        <Cell className="w-[215px] pl-[5px]">Selected: 1 row, 10 columns</Cell>
        <Cell className="min-w-0 flex-1 pl-[5px]">PageStyle_Sammanfattning</Cell>
        <Cell className="w-[166px] justify-center">English (USA)</Cell>
        <Cell className="w-[46px]" />
        <Cell className="w-[31px] justify-center">
          <svg viewBox="0 0 20 12" className="h-3 w-5" fill="none" aria-hidden="true">
            <path d="M1 3h11v6.500H1z" stroke="#3b8fd0" />
            <path d="M15 1h4M15 11.500h4M17 1v10.500" stroke="#4a4a48" />
          </svg>
        </Cell>
        <Cell className="w-5" />
        <Cell className="w-5" />
        <Cell className="w-[180px] justify-center">Average: ; Sum: 0</Cell>
        <Cell className="w-[97px] gap-1 pl-1.5">
          <button type="button" aria-label="Zoom out" className="flex"><svg viewBox="0 0 7 7" className="size-[7px]" aria-hidden="true"><path d="M0 3.500h7" stroke="#1f1f1f" strokeWidth="1.500" /></svg></button>
          <input
            type="range"
            aria-label="Zoom"
            min="0"
            max="100"
            defaultValue="49"
            className="h-[7px] w-[65px] appearance-none bg-transparent [&::-webkit-slider-runnable-track]:h-px [&::-webkit-slider-runnable-track]:bg-[#8b8a88] [&::-webkit-slider-thumb]:-mt-[3px] [&::-webkit-slider-thumb]:h-[7px] [&::-webkit-slider-thumb]:w-[3px] [&::-webkit-slider-thumb]:appearance-none [&::-webkit-slider-thumb]:border [&::-webkit-slider-thumb]:border-[#4a4a48] [&::-webkit-slider-thumb]:bg-[#f6f5f4]"
          />
          <button type="button" aria-label="Zoom in" className="flex"><svg viewBox="0 0 7 7" className="size-[7px]" aria-hidden="true"><path d="M0 3.500h7M3.500 0v7" stroke="#1f1f1f" strokeWidth="1.500" /></svg></button>
        </Cell>
        <Cell className="w-[32px] pl-1">100%</Cell>
      </footer>
    </div>
  );
}
